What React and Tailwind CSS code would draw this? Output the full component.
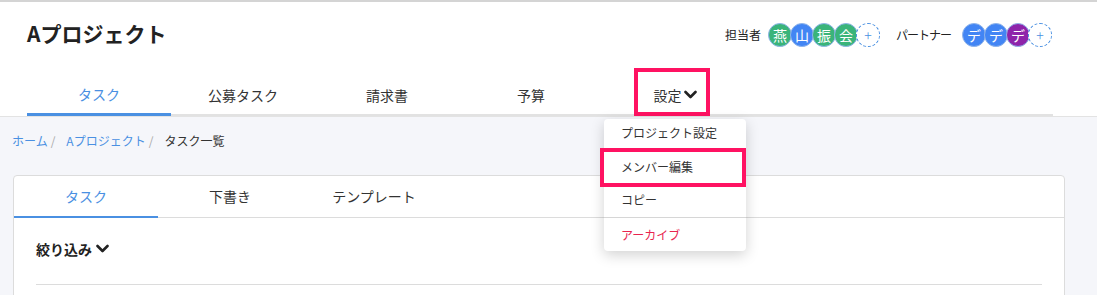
const FONT = { fontFamily: '"Noto Sans CJK JP", "Noto Sans", sans-serif' };

const members = [
  { ch: '燕', c: 'bg-[#3ab47a]' },
  { ch: '山', c: 'bg-[#4285f4]' },
  { ch: '振', c: 'bg-[#3ab47a]' },
  { ch: '会', c: 'bg-[#3ab47a]' },
];
const partners = [
  { ch: 'デ', c: 'bg-[#4285f4]' },
  { ch: 'デ', c: 'bg-[#4285f4]' },
  { ch: 'デ', c: 'bg-[#8e24aa]' },
];

function Chevron() {
  return (
    <svg width="13" height="10" viewBox="0 0 13 10" className="text-[#222]">
      <polyline points="1.5,2 6.5,7 11.5,2" fill="none" stroke="currentColor" strokeWidth="2.6" strokeLinecap="round" strokeLinejoin="round" />
    </svg>
  );
}

function Avatars({ list }) {
  return (
    <div className="flex items-center">
      {list.map((m, i) => (
        <div
          key={i}
          className={`${m.c} w-[24px] h-[24px] rounded-full border border-[#8fb4ea] text-white text-[14px] leading-none flex items-center justify-center ${i > 0 ? '-ml-[2px]' : ''}`}
        >
          {m.ch}
        </div>
      ))}
      <div className="-ml-[2px] w-[24px] h-[24px] rounded-full border border-dashed border-[#4a90e2] bg-white text-[#4a90e2] text-[14px] font-light leading-none flex items-center justify-center">
        +
      </div>
    </div>
  );
}

export default function App() {
  const navTabs = ['タスク', '公募タスク', '請求書', '予算'];
  return (
    <div style={FONT} className="w-[1097px] h-[295px] overflow-hidden bg-[#f5f6fa] text-[#333]">
      <div className="bg-white border-t-2 border-[#d4d4d4] border-b border-b-[#e3e3e3]">
        <div className="h-[74px] pl-[27px] pr-[45px] flex justify-between items-start">
          <h1 className="mt-[16px] text-[21px] font-bold text-[#222]">Aプロジェクト</h1>
          <div className="mt-[21px] flex items-center text-[12px] text-[#222]">
            <span className="mr-[7px]">担当者</span>
            <Avatars list={members} />
            <span className="ml-[16px] mr-[11px] tracking-[-1px]">パートナー</span>
            <Avatars list={partners} />
          </div>
        </div>
        <div className="ml-[27px] mr-[44px] h-[40px] flex border-b-2 border-[#e2e2e2]">
          {navTabs.map((t, i) => (
            <div
              key={t}
              className={`w-[144px] flex items-center justify-center text-[14px] ${i === 0 ? 'text-[#4a90e2] border-b-[3px] border-[#4a90e2] -mb-[2px]' : 'text-[#333]'}`}
            >
              {t}
            </div>
          ))}
          <div className="relative w-[144px] flex items-center justify-center text-[14px]">
            <span className="flex items-center gap-[2px]">
              設定
              <Chevron />
            </span>
            <div className="absolute left-[31px] top-[-8px] w-[76px] h-[48px] border-4 border-[#ff1262]" />
          </div>
        </div>
      </div>

      <div className="relative">
        <div className="h-[48px] px-[12px] flex items-center text-[12px]">
          <span className="text-[#4a90e2]">ホーム</span>
          <span className="text-[#aaa] ml-[3px] mr-[11px]">/</span>
          <span className="text-[#4a90e2]">Aプロジェクト</span>
          <span className="text-[#aaa] ml-[3px] mr-[11px]">/</span>
          <span className="text-[#333]">タスク一覧</span>
        </div>

        <div className="ml-[13px] mr-[32px] mt-[10px] bg-white border border-[#dcdcdc] rounded-[4px] h-[200px]">
          <div className="h-[42px] flex border-b border-[#dcdcdc]">
            {['タスク', '下書き', 'テンプレート'].map((t, i) => (
              <div
                key={t}
                className={`w-[144px] flex items-center justify-center text-[14px] ${i === 0 ? 'text-[#4a90e2] border-b-2 border-[#4a90e2] -mb-px' : 'text-[#333]'}`}
              >
                {t}
              </div>
            ))}
          </div>
          <div className="px-[22px]">
            <div className="h-[66px] pt-[20px] flex items-start gap-[4px] text-[14px] font-bold text-[#222]">
              <span className="leading-[22px]">絞り込み</span>
              <span className="h-[22px] flex items-center"><Chevron /></span>
            </div>
            <div className="border-t border-[#dcdcdc]" />
          </div>
        </div>

        <div className="absolute left-[604px] top-[2px] w-[142px] bg-white rounded-[4px] shadow-[0_4px_14px_rgba(0,0,0,0.18)] text-[12px]">
          <div className="h-[28px] pl-[17px] flex items-center">プロジェクト設定</div>
          <div className="h-[39px] pl-[17px] flex items-center">メンバー編集</div>
          <div className="h-[32px] pl-[17px] pb-[3px] flex items-center border-b border-[#d6d6d6]">コピー</div>
          <div className="h-[33px] pl-[17px] flex items-center text-[#e8254f]">アーカイブ</div>
        </div>
        <div className="absolute left-[600px] top-[31px] w-[146px] h-[39px] border-4 border-[#ff1262]" />
      </div>
    </div>
  );
}
